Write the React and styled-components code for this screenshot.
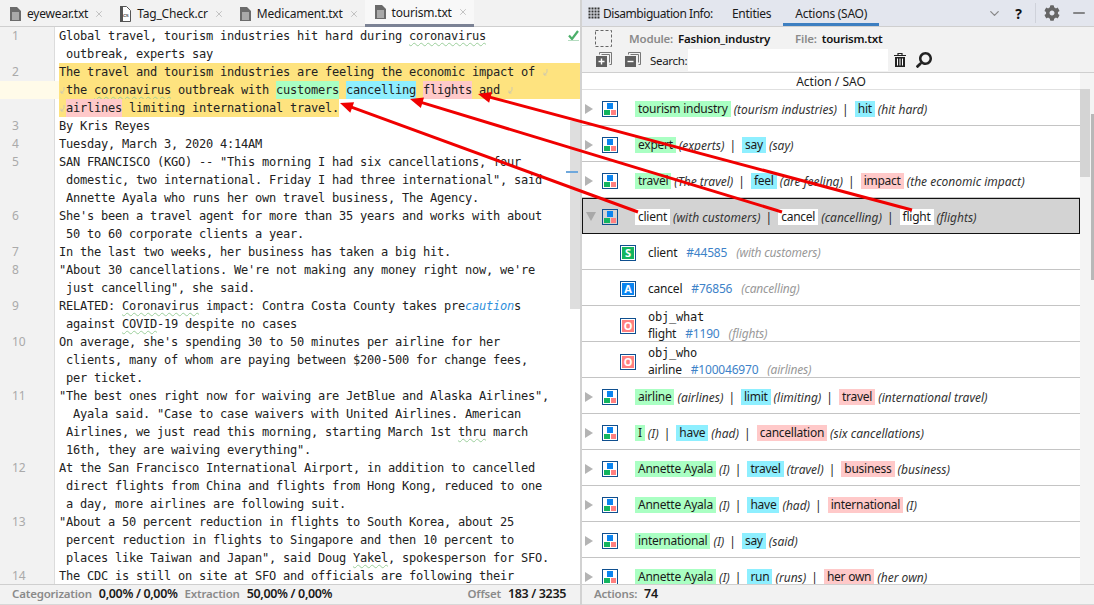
import React from 'react';
import styled, { createGlobalStyle } from 'styled-components';
import { FaCog, FaSearch } from 'react-icons/fa';
import { X, ChevronDown, Minus } from 'lucide-react';

const UI_FONT = `'Noto Sans', 'Open Sans', sans-serif`;
const CODE_FONT = `'DejaVu Sans Mono', 'Liberation Mono', monospace`;
const CHIP = { s: '#aaffc3', a: '#8eefff', o: '#ffc9c9', w: '#ffffff' };
const YELLOW = '#fee37f';

const Wrap = () => (
  <WrapIcon viewBox="0 0 7 9">
    <path d="M5 1v3.5L2 7M2 4.5V7h2.5" fill="none" stroke="#cfc9ae" strokeWidth="1" />
  </WrapIcon>
);

const CodeLines = () => (
  <>
    <Line num="1"><Code>Global travel, tourism industries hit hard during <Wavy>coronavirus</Wavy></Code></Line>
    <Line><Code> outbreak, experts say</Code></Line>
    <Line num="2"><Code $hl>The travel and tourism industries are feeling the economic impact of <Wrap /></Code></Line>
    <Line $current>
      <Code $hl>
        <Wrap />the <Wavy>coronavirus</Wavy> outbreak with <Mark $c="s">customers</Mark> <Mark $c="a">cancelling</Mark>{' '}
        <Mark $c="o">flights</Mark> and <Wrap />
      </Code>
    </Line>
    <Line>
      <Code>
        <Partial><Wrap /><Mark $c="o">airlines</Mark> limiting international travel.</Partial>
      </Code>
    </Line>
    <Line num="3"><Code>By Kris Reyes</Code></Line>
    <Line num="4"><Code>Tuesday, March 3, 2020 4:14AM</Code></Line>
    <Line num="5"><Code>SAN FRANCISCO (KGO) -- "This morning I had six cancellations, four</Code></Line>
    <Line><Code> domestic, two international. Friday I had three international", said</Code></Line>
    <Line><Code> Annette Ayala who runs her own travel business, The Agency.</Code></Line>
    <Line num="6"><Code>She's been a travel agent for more than 35 years and works with about</Code></Line>
    <Line><Code> 50 to 60 corporate clients a year.</Code></Line>
    <Line num="7"><Code>In the last two weeks, her business has taken a big hit.</Code></Line>
    <Line num="8"><Code>"About 30 cancellations. We're not making any money right now, we're</Code></Line>
    <Line><Code> just cancelling", she said.</Code></Line>
    <Line num="9"><Code>RELATED: <Wavy>Coronavirus</Wavy> impact: Contra Costa County takes pre<Caution>caution</Caution>s</Code></Line>
    <Line><Code> against <Wavy>COVID</Wavy>-19 despite no cases</Code></Line>
    <Line num="10"><Code>On average, she's spending 30 to 50 minutes per airline for her</Code></Line>
    <Line><Code> clients, many of whom are paying between $200-500 for change fees,</Code></Line>
    <Line><Code> per ticket.</Code></Line>
    <Line num="11"><Code>"The best ones right now for waiving are JetBlue and Alaska Airlines",</Code></Line>
    <Line><Code>  Ayala said. "Case to case waivers with United Airlines. American</Code></Line>
    <Line><Code> Airlines, we just read this morning, starting March 1st <Wavy>thru</Wavy> march</Code></Line>
    <Line><Code> 16th, they are waiving everything".</Code></Line>
    <Line num="12"><Code>At the San Francisco International Airport, in addition to cancelled</Code></Line>
    <Line><Code> direct flights from China and flights from Hong Kong, reduced to one</Code></Line>
    <Line><Code> a day, more airlines are following suit.</Code></Line>
    <Line num="13"><Code>"About a 50 percent reduction in flights to South Korea, about 25</Code></Line>
    <Line><Code> percent reduction in flights to Singapore and then 10 percent to</Code></Line>
    <Line><Code> places like Taiwan and Japan", said Doug <Wavy>Yakel</Wavy>, spokesperson for SFO.</Code></Line>
    <Line num="14"><Code>The CDC is still on site at SFO and officials are following their</Code></Line>
  </>
);

const Line = ({ num, $current, children }) => (
  <LineRow $current={$current}>
    <LineNum $current={$current}>{num}</LineNum>
    {children}
  </LineRow>
);

const FileIcon = () => (
  <svg width="11" height="14" viewBox="0 0 11 14">
    <path d="M0 0h7l4 4v10H0z" fill="#6b6b6b" />
    <path d="M2 6h7M2 8h7M2 10h7M2 12h7" stroke="#e8e8e8" strokeWidth="1" />
  </svg>
);

const CsIcon = () => (
  <svg width="11" height="16" viewBox="0 0 11 16">
    <path d="M.5.5h6l4 4v11H.5z" fill="#fff" stroke="#555" />
    <path d="M0 0h3v16H0z" fill="#555" />
    <text x="3" y="11" fontSize="6" fontFamily="Liberation Sans" fill="#333">cs</text>
  </svg>
);

const DotsIcon = () => (
  <svg width="12" height="12" viewBox="0 0 12 12" fill="#333">
    {[0, 3, 6, 9].map((x) =>
      [0, 3, 6, 9].map((y) => <rect key={`${x}-${y}`} x={x + 0.5} y={y + 0.5} width="2" height="2" />)
    )}
  </svg>
);

const SelectIcon = () => (
  <svg width="17" height="17" viewBox="0 0 17 17">
    <rect x=".5" y=".5" width="16" height="16" fill="none" stroke="#666" strokeDasharray="3 2" />
  </svg>
);

const StackIcon = ({ plus }) => (
  <svg width="16" height="16" viewBox="0 0 16 16">
    <path d="M3.5 2.5v-2h12v12h-2M5.5 2.5h8v8" fill="none" stroke="#777" />
    <rect x="0" y="4" width="11" height="11" fill="#606060" />
    <path d={plus ? 'M2.5 9.5h6M5.5 6.5v6' : 'M2.5 9.5h6'} stroke="#fff" strokeWidth="1.4" />
  </svg>
);

const TrashIcon = () => (
  <svg width="12" height="14" viewBox="0 0 12 14">
    <path d="M0 2.5h12M4 2V.5h4V2" stroke="#222" strokeWidth="1.2" fill="none" />
    <path d="M1 4h10v10H1z" fill="#222" />
    <path d="M3.5 5.5v7M6 5.5v7M8.5 5.5v7" stroke="#fff" strokeWidth="1" />
  </svg>
);

const SaoIcon = () => (
  <svg width="16" height="16" viewBox="0 0 16 16">
    <path d="M.5 16V0M15.5 16V0" stroke="#0f4f8f" />
    <path d="M0 .5h16M0 15.5h16" stroke="#0f4f8f" />
    <rect x="5" y="2" width="6" height="6" fill="#0a84f0" />
    <rect x="2" y="9" width="6" height="5" fill="#14b560" />
    <rect x="9" y="9" width="5" height="5" fill="#ff8080" />
  </svg>
);

const CheckMark = () => (
  <svg width="11" height="11" viewBox="0 0 11 11">
    <path d="M1 5.5l3 3.5 6-8" fill="none" stroke="#4caf6a" strokeWidth="2.2" />
    <path d="M0 10.5h11" stroke="#b5dcc0" />
  </svg>
);

const TABS = [
  { name: 'eyewear.txt', icon: <FileIcon /> },
  { name: 'Tag_Check.cr', icon: <CsIcon /> },
  { name: 'Medicament.txt', icon: <FileIcon /> },
  { name: 'tourism.txt', icon: <FileIcon />, active: true },
];

const SAO_BEFORE = [
  [['s', 'tourism industry', '(tourism industries)'], ['a', 'hit', '(hit hard)']],
  [['s', 'expert', '(experts)'], ['a', 'say', '(say)']],
  [['s', 'travel', '(The travel)'], ['a', 'feel', '(are feeling)'], ['o', 'impact', '(the economic impact)']],
];

const SAO_SELECTED = [['w', 'client', '(with customers)'], ['w', 'cancel', '(cancelling)'], ['w', 'flight', '(flights)']];

const SAO_AFTER = [
  [['s', 'airline', '(airlines)'], ['a', 'limit', '(limiting)'], ['o', 'travel', '(international travel)']],
  [['s', 'I', '(I)'], ['a', 'have', '(had)'], ['o', 'cancellation', '(six cancellations)']],
  [['s', 'Annette Ayala', '(I)'], ['a', 'travel', '(travel)'], ['o', 'business', '(business)']],
  [['s', 'Annette Ayala', '(I)'], ['a', 'have', '(had)'], ['o', 'international', '(I)']],
  [['s', 'international', '(I)'], ['a', 'say', '(said)']],
  [['s', 'Annette Ayala', '(I)'], ['a', 'run', '(runs)'], ['o', 'her own', '(her own)']],
];

const CHILDREN = [
  { badge: 'S', name: 'client', id: '#44585', src: '(with customers)' },
  { badge: 'A', name: 'cancel', id: '#76856', src: '(cancelling)' },
  { badge: 'O', role: 'obj_what', name: 'flight', id: '#1190', src: '(flights)' },
  { badge: 'O', role: 'obj_who', name: 'airline', id: '#100046970', src: '(airlines)' },
];

const SaoRow = ({ parts, selected }) => (
  <Row $selected={selected}>
    <Caret $open={selected} />
    <IconSlot><SaoIcon /></IconSlot>
    <Parts>
      {parts.map(([kind, word, src], i) => (
        <React.Fragment key={word + i}>
          {i > 0 && <Pipe>|</Pipe>}
          <Chip $c={kind}>{word}</Chip>
          <Source>{src}</Source>
        </React.Fragment>
      ))}
    </Parts>
  </Row>
);

const ChildRow = ({ badge, role, name, id, src }) => (
  <Child $double={!!role}>
    <Badge $kind={badge} $double={!!role}>{badge}</Badge>
    <ChildText>
      {role && <Role>{role}</Role>}
      <ChildLine $double={!!role}>
        <span>{name}</span>
        <EntityId>{id}</EntityId>
        <GreySource>{src}</GreySource>
      </ChildLine>
    </ChildText>
  </Child>
);

// red callouts from the expanded row back to the words in the text
const ARROWS = [
  [638, 212, 340, 103],
  [782, 212, 410, 99],
  [912, 210, 478, 94],
];

const Arrow = ({ from: [x1, y1], to: [x2, y2] }) => {
  const a = Math.atan2(y1 - y2, x1 - x2);
  const head = (d, w) => [x2 + Math.cos(a) * d - Math.sin(a) * w, y2 + Math.sin(a) * d + Math.cos(a) * w].join(',');
  return (
    <>
      <line x1={x1} y1={y1} x2={x2 + Math.cos(a) * 10} y2={y2 + Math.sin(a) * 10} stroke="#f00000" strokeWidth="3" />
      <polygon points={`${x2},${y2} ${head(13, 5.5)} ${head(13, -5.5)}`} fill="#f00000" />
    </>
  );
};

export default function App() {
  return (
    <Page>
      <GlobalStyle />
      <LeftPane>
        <TabBar>
          {TABS.map((t) => (
            <Tab key={t.name} $active={t.active}>
              {t.icon}
              <span>{t.name}</span>
              <X size={10} color="#b8b8b8" />
            </Tab>
          ))}
        </TabBar>
        <Editor>
          <EditorScroll />
          <ScrollMark />
          <CheckSlot><CheckMark /></CheckSlot>
          <CodeLines />
        </Editor>
        <StatusBar>
          <StatusLabel>Categorization</StatusLabel>
          <StatusValue>0,00% / 0,00%</StatusValue>
          <StatusLabel>Extraction</StatusLabel>
          <StatusValue>50,00% / 0,00%</StatusValue>
          <StatusSpacer />
          <StatusLabel>Offset</StatusLabel>
          <StatusValue>183 / 3235</StatusValue>
        </StatusBar>
      </LeftPane>

      <RightPane>
        <PanelHeader>
          <DotsIcon />
          <PanelTitle>Disambiguation Info:</PanelTitle>
          <PanelTab>Entities</PanelTab>
          <PanelTab $active>Actions (SAO)</PanelTab>
          <HeaderTools>
            <ChevronDown size={15} color="#888" />
            <Help>?</Help>
            <ToolDivider />
            <Gear size={16} color="#666" />
            <Minus size={18} color="#666" />
          </HeaderTools>
        </PanelHeader>

        <Toolbar>
          <ToolRow>
            <SelectSlot><SelectIcon /></SelectSlot>
            <MetaLabel>Module:</MetaLabel>
            <MetaValue>Fashion_industry</MetaValue>
            <MetaLabel $file>File:</MetaLabel>
            <MetaValue>tourism.txt</MetaValue>
          </ToolRow>
          <ToolRow>
            <StackSlot><StackIcon plus /></StackSlot>
            <StackSlot><StackIcon /></StackSlot>
            <SearchLabel>Search:</SearchLabel>
            <SearchBox />
            <SearchTools>
              <TrashIcon />
              <Magnifier size={16} color="#222" />
            </SearchTools>
          </ToolRow>
        </Toolbar>

        <TableArea>
          <Table>
            <TableHead>Action / SAO</TableHead>
            {SAO_BEFORE.map((parts, i) => <SaoRow key={i} parts={parts} />)}
            <SaoRow parts={SAO_SELECTED} selected />
            {CHILDREN.map((c) => <ChildRow key={c.name} {...c} />)}
            {SAO_AFTER.map((parts, i) => <SaoRow key={i} parts={parts} />)}
          </Table>
          <ScrollTrack>
            <ScrollThumb />
            <ScrollEdge />
          </ScrollTrack>
        </TableArea>

        <StatusBar $right>
          <StatusLabel>Actions:</StatusLabel>
          <StatusValue>74</StatusValue>
        </StatusBar>
      </RightPane>

      <Callouts width="1094" height="605">
        {ARROWS.map(([x1, y1, x2, y2]) => (
          <Arrow key={x1} from={[x1, y1]} to={[x2, y2]} />
        ))}
      </Callouts>
    </Page>
  );
}

const GlobalStyle = createGlobalStyle`
  html, body {
    margin: 0;
    padding: 0;
    background: #f2f2f2;
  }
`;

const Page = styled.div`
  position: relative;
  display: flex;
  width: 1094px;
  height: 605px;
  overflow: hidden;
  font-family: ${UI_FONT};
  font-size: 12px;
  color: #1a1a1a;
  background: #f2f2f2;
`;

const LeftPane = styled.div`
  display: flex;
  flex-direction: column;
  width: 580px;
  flex: none;
`;

const TabBar = styled.div`
  display: flex;
  height: 27px;
  flex: none;
  box-sizing: border-box;
  background: #f2f2f2;
  border-bottom: 1px solid #cfcfcf;
`;

const Tab = styled.div`
  display: flex;
  align-items: center;
  gap: 6px;
  height: 27px;
  box-sizing: border-box;
  padding: 0 6px 0 10px;
  background: ${(p) => (p.$active ? '#f8f8f8' : 'transparent')};
  border-bottom: ${(p) => (p.$active ? '3px solid #7b8294' : 'none')};
  letter-spacing: -0.2px;
`;

const Editor = styled.div`
  position: relative;
  flex: 1;
  min-height: 0;
  overflow: hidden;
  background: #fff;
`;

const EditorScroll = styled.div`
  position: absolute;
  top: 94px;
  right: 0;
  width: 10px;
  height: 188px;
  background: #dedede;
`;

const ScrollMark = styled.div`
  position: absolute;
  top: 144px;
  right: 2px;
  width: 12px;
  height: 2px;
  background: #6fa8dc;
  z-index: 2;
`;

const CheckSlot = styled.div`
  position: absolute;
  top: 1px;
  right: 1px;
  z-index: 2;
`;

const LineRow = styled.div`
  position: relative;
  display: flex;
  height: 18px;
  background: ${(p) => (p.$current ? '#fffbe9' : 'transparent')};
`;

const LineNum = styled.div`
  width: 42px;
  flex: none;
  padding-left: 12px;
  line-height: 18px;
  font-size: 12px;
  color: #aaa;
  background: ${(p) => (p.$current ? 'transparent' : '#f2f2f2')};
  border-right: 1px solid ${(p) => (p.$current ? 'transparent' : '#dcdcdc')};
`;

const Code = styled.div`
  flex: 1;
  margin-left: 4px;
  white-space: pre;
  font-family: ${CODE_FONT};
  font-size: 12px;
  letter-spacing: -0.225px;
  line-height: 18px;
  color: #222;
  background: ${(p) => (p.$hl ? YELLOW : 'transparent')};
`;

const Partial = styled.span`
  display: inline-block;
  height: 18px;
  background: ${YELLOW};
`;

const Mark = styled.span`
  display: inline-block;
  height: 18px;
  background: ${(p) => CHIP[p.$c]};
`;

const Wavy = styled.span`
  text-decoration: underline wavy #9ccf9c 1px;
  text-underline-offset: 2px;
`;

const Caution = styled.i`
  color: #2f8fdc;
`;

const WrapIcon = styled.svg`
  display: inline-block;
  width: 7px;
  height: 9px;
  vertical-align: -1px;
`;

const StatusBar = styled.div`
  display: flex;
  align-items: center;
  gap: 7px;
  flex: none;
  height: 21px;
  box-sizing: border-box;
  padding: 0 14px 3px 12px;
  background: #f2f2f2;
  border-top: 1px solid #cfcfcf;
  box-shadow: inset 0 -1px 0 #d8d8d8;
`;

const StatusLabel = styled.span`
  font-size: 11.5px;
  font-weight: 600;
  letter-spacing: -0.2px;
  color: #8a8a8a;
`;

const StatusValue = styled.span`
  font-size: 12.5px;
  font-weight: 600;
  letter-spacing: -0.35px;
  color: #1a1a1a;
`;

const StatusSpacer = styled.div`
  flex: 1;
`;

const RightPane = styled.div`
  display: flex;
  flex-direction: column;
  flex: 1;
  min-width: 0;
  border-left: 2px solid #d2d2d2;
`;

const PanelHeader = styled.div`
  display: flex;
  align-items: center;
  flex: none;
  height: 27px;
  box-sizing: border-box;
  padding-left: 6px;
  background: #e3e6ee;
  border-bottom: 1px solid #cfcfcf;
`;

const PanelTitle = styled.span`
  margin-left: 3px;
  margin-right: 7px;
  letter-spacing: -0.45px;
`;

const PanelTab = styled.div`
  display: flex;
  align-items: center;
  height: 26px;
  box-sizing: border-box;
  padding: 3px 12px 0;
  letter-spacing: -0.25px;
  border-bottom: 3px solid ${(p) => (p.$active ? '#3d7fc1' : 'transparent')};
`;

const HeaderTools = styled.div`
  display: flex;
  align-items: center;
  gap: 10px;
  margin-left: auto;
  padding-right: 6px;
`;

const Help = styled.span`
  margin: 0 3px;
  font-weight: 700;
  font-size: 14px;
  color: #111;
`;

const ToolDivider = styled.div`
  width: 1px;
  height: 20px;
  background: #cfd2da;
`;

const Gear = styled(FaCog)`
  margin-left: -2px;
`;

const Toolbar = styled.div`
  display: flex;
  flex-direction: column;
  flex: none;
  height: 46px;
  box-sizing: border-box;
  background: #f2f2f2;
  border-bottom: 1px solid #cfcfcf;
`;

const ToolRow = styled.div`
  display: flex;
  align-items: center;
  height: 22px;
  &:first-child {
    height: 21px;
    padding-top: 1px;
  }
`;

const SelectSlot = styled.div`
  display: flex;
  margin-left: 13px;
  margin-right: 17px;
`;

const MetaLabel = styled.span`
  margin-left: ${(p) => (p.$file ? '25px' : '0')};
  margin-right: 5px;
  font-size: 11.5px;
  font-weight: 600;
  letter-spacing: -0.2px;
  color: #8a8a8a;
`;

const MetaValue = styled.span`
  font-size: 11.5px;
  font-weight: 600;
  letter-spacing: -0.2px;
  color: #111;
`;

const StackSlot = styled.div`
  display: flex;
  margin-left: 14px;
  margin-right: -1px;
`;

const SearchLabel = styled.span`
  flex: none;
  width: 38px;
  margin-left: 10px;
  font-size: 11.5px;
  letter-spacing: -0.3px;
`;

const SearchBox = styled.div`
  width: 200px;
  height: 22px;
  background: #fff;
`;

const SearchTools = styled.div`
  display: flex;
  align-items: center;
  gap: 10px;
  margin-left: 6px;
`;

const Magnifier = styled(FaSearch)`
  transform: scaleX(-1);
`;

const TableArea = styled.div`
  display: flex;
  flex: 1;
  min-height: 0;
`;

const Table = styled.div`
  flex: 1;
  min-width: 0;
  overflow: hidden;
  background: #fff;
`;

const TableHead = styled.div`
  height: 17px;
  box-sizing: border-box;
  line-height: 17px;
  text-align: center;
  border-bottom: 1px solid #e0e0e0;
`;

const Row = styled.div`
  display: flex;
  align-items: flex-start;
  height: 36px;
  box-sizing: border-box;
  padding: ${(p) => (p.$selected ? '10px 0 0 3px' : '11px 0 0 3px')};
  background: ${(p) => (p.$selected ? '#d3d3d3' : '#fff')};
  border: ${(p) => (p.$selected ? '1px solid #111' : 'none')};
  border-bottom: ${(p) => (p.$selected ? '1px solid #111' : '1px solid #c4c4c4')};
`;

const Caret = styled.div`
  flex: none;
  width: 0;
  height: 0;
  margin-top: 3px;
  ${(p) =>
    p.$open
      ? `border-left: 5px solid transparent; border-right: 5px solid transparent; border-top: 9px solid #a8a8a8;`
      : `border-top: 5px solid transparent; border-bottom: 5px solid transparent; border-left: 8px solid #b4b4b4;`}
  margin-right: ${(p) => (p.$open ? '6px' : '9px')};
`;

const IconSlot = styled.div`
  display: flex;
  flex: none;
  margin-right: 17px;
`;

const Parts = styled.div`
  display: flex;
  align-items: center;
  height: 16px;
  white-space: nowrap;
`;

const Chip = styled.span`
  height: 16px;
  padding: 0 3px;
  line-height: 16px;
  letter-spacing: -0.25px;
  background: ${(p) => CHIP[p.$c]};
`;

const Source = styled.i`
  margin-left: 3px;
  color: #333;
`;

const Pipe = styled.span`
  margin: 0 6px 0 5px;
  color: #222;
`;

const Child = styled.div`
  display: flex;
  align-items: flex-start;
  gap: 12px;
  height: 36px;
  box-sizing: border-box;
  padding: ${(p) => (p.$double ? '4px 0 0 38px' : '11px 0 0 38px')};
  background: #fff;
  border-bottom: 1px solid #c4c4c4;
`;

const BADGE_COLOR = { S: '#14b560', A: '#0a84f0', O: '#ff8080' };

const Badge = styled.div`
  flex: none;
  width: 16px;
  height: 16px;
  box-sizing: border-box;
  margin-top: ${(p) => (p.$double ? '8px' : '0')};
  border: 1px solid #0f4f8f;
  background: ${(p) => BADGE_COLOR[p.$kind]};
  box-shadow: inset 0 0 0 1px #fff;
  line-height: 14px;
  text-align: center;
  font-size: 11px;
  font-weight: 700;
  color: #fff;
`;

const ChildText = styled.div`
  display: flex;
  flex-direction: column;
  line-height: 16px;
`;

const Role = styled.span`
  line-height: 15px;
  font-family: ${CODE_FONT};
  letter-spacing: -0.225px;
`;

const ChildLine = styled.div`
  display: flex;
  gap: 9px;
  margin-top: ${(p) => (p.$double ? '1px' : '0')};
  letter-spacing: -0.2px;
`;

const EntityId = styled.span`
  color: #3d82c8;
`;

const GreySource = styled.i`
  color: #999;
`;

const ScrollTrack = styled.div`
  position: relative;
  flex: none;
  width: 14px;
  background: #f4f4f4;
`;

const ScrollThumb = styled.div`
  width: 10px;
  height: 88px;
  margin-top: 16px;
  background: #d4d4d4;
`;

const ScrollEdge = styled.div`
  position: absolute;
  top: 41px;
  right: 0;
  width: 3px;
  height: 166px;
  background: #b8b8b8;
`;

const Callouts = styled.svg`
  position: absolute;
  top: 0;
  left: 0;
  pointer-events: none;
  z-index: 5;
`;
